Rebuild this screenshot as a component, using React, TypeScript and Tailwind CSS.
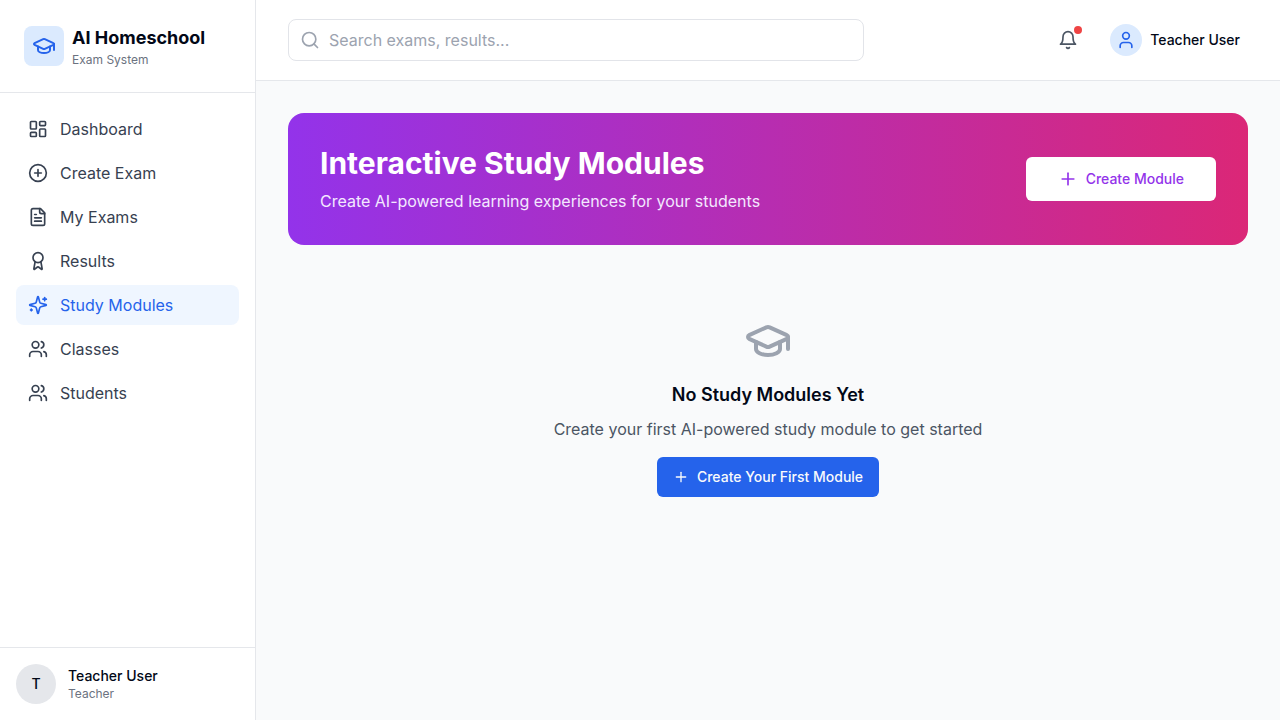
import React from "react";
import {
  Award,
  CirclePlus,
  GraduationCap,
  LayoutDashboard,
  Plus,
  Search,
  User,
  Users,
} from "lucide-react";

type IconProps = { className?: string };

type NavItem = {
  label: string;
  icon: React.ComponentType<IconProps>;
  active?: boolean;
};

function StrokeIcon({ className, children }: IconProps & { children: React.ReactNode }) {
  return (
    <svg
      viewBox="0 0 24 24"
      fill="none"
      stroke="currentColor"
      strokeWidth="2"
      strokeLinecap="round"
      strokeLinejoin="round"
      aria-hidden="true"
      className={className}
    >
      {children}
    </svg>
  );
}

function Sparkles({ className }: IconProps) {
  return (
    <StrokeIcon className={className}>
      <path d="M9.937 15.5A2 2 0 0 0 8.5 14.063l-6.135-1.582a.5.5 0 0 1 0-.962L8.5 9.936A2 2 0 0 0 9.937 8.5l1.582-6.135a.5.5 0 0 1 .963 0L14.063 8.5A2 2 0 0 0 15.5 9.937l6.135 1.581a.5.5 0 0 1 0 .964L15.5 14.063a2 2 0 0 0-1.437 1.437l-1.582 6.135a.5.5 0 0 1-.963 0z" />
      <path d="M20 3v4" />
      <path d="M22 5h-4" />
      <path d="M4 17v2" />
      <path d="M5 18H3" />
    </StrokeIcon>
  );
}

function Bell({ className }: IconProps) {
  return (
    <StrokeIcon className={className}>
      <path d="M6 8a6 6 0 0 1 12 0c0 7 3 9 3 9H3s3-2 3-9" />
      <path d="M10.3 21a1.94 1.94 0 0 0 3.4 0" />
    </StrokeIcon>
  );
}

function FileText({ className }: IconProps) {
  return (
    <StrokeIcon className={className}>
      <path d="M15 2H6a2 2 0 0 0-2 2v16a2 2 0 0 0 2 2h12a2 2 0 0 0 2-2V7Z" />
      <path d="M14 2v4a2 2 0 0 0 2 2h4" />
      <path d="M10 9H8" />
      <path d="M16 13H8" />
      <path d="M16 17H8" />
    </StrokeIcon>
  );
}

const navItems: NavItem[] = [
  { label: "Dashboard", icon: LayoutDashboard },
  { label: "Create Exam", icon: CirclePlus },
  { label: "My Exams", icon: FileText },
  { label: "Results", icon: Award },
  { label: "Study Modules", icon: Sparkles, active: true },
  { label: "Classes", icon: Users },
  { label: "Students", icon: Users },
];

function Sidebar() {
  return (
    <aside className="flex w-64 shrink-0 flex-col border-r border-[#e5e7eb] bg-white">
      <div className="flex items-center gap-2 border-b border-[#e5e7eb] p-6">
        <div className="flex size-10 items-center justify-center rounded-lg bg-[#dbeafe]">
          <GraduationCap className="size-6 text-[#2563eb]" />
        </div>
        <div>
          <p className="text-lg font-bold">AI Homeschool</p>
          <p className="text-xs text-[#6b7280]">Exam System</p>
        </div>
      </div>
      <nav className="flex flex-1 flex-col gap-1 p-4">
        {navItems.map(({ label, icon: Icon, active }) => (
          <a
            key={label}
            href="#"
            aria-current={active ? "page" : undefined}
            className={
              active
                ? "flex items-center gap-3 rounded-lg bg-[#eff6ff] px-3 py-2 text-[#2563eb]"
                : "flex items-center gap-3 rounded-lg px-3 py-2 text-[#374151]"
            }
          >
            <Icon className="size-5" />
            <span>{label}</span>
          </a>
        ))}
      </nav>
      <div className="flex items-center gap-3 border-t border-[#e5e7eb] p-4">
        <div className="flex size-10 items-center justify-center rounded-full bg-[#e5e7eb] text-sm font-medium">
          T
        </div>
        <div>
          <p className="text-sm font-medium">Teacher User</p>
          <p className="text-xs text-[#6b7280]">Teacher</p>
        </div>
      </div>
    </aside>
  );
}

function TopBar() {
  return (
    <header className="flex items-center justify-between border-b border-[#e5e7eb] bg-white px-8 py-4">
      <div className="relative w-full max-w-xl">
        <Search className="absolute top-1/2 left-3 size-5 -translate-y-1/2 text-[#9ca3af]" />
        <input
          type="search"
          aria-label="Search"
          placeholder="Search exams, results..."
          className="w-full rounded-lg border border-[#e2e4e9] py-2 pr-4 pl-10 placeholder:text-[#9ca3af]"
        />
      </div>
      <div className="flex items-center gap-4">
        <button type="button" aria-label="Notifications" className="relative p-2">
          <Bell className="size-5 text-[#4b5563]" />
          <span className="absolute top-1 right-1 size-2 rounded-full bg-[#ef4444]" />
        </button>
        <button type="button" className="flex items-center gap-2 px-2 py-2 text-sm font-medium">
          <span className="flex size-8 items-center justify-center rounded-full bg-[#dbeafe]">
            <User className="size-5 text-[#2563eb]" />
          </span>
          Teacher User
        </button>
      </div>
    </header>
  );
}

function StudyModules() {
  return (
    <main className="flex-1 p-8">
      <section className="flex items-center justify-between rounded-2xl bg-linear-to-r/srgb from-[#9333ea] to-[#db2777] p-8 text-white">
        <div>
          <h1 className="mb-2 text-3xl font-bold">Interactive Study Modules</h1>
          <p className="text-[#f3e8ff]">Create AI-powered learning experiences for your students</p>
        </div>
        <button
          type="button"
          className="flex h-11 items-center gap-2 rounded-md bg-white px-8 text-sm font-medium text-[#9333ea]"
        >
          <Plus className="size-5" />
          Create Module
        </button>
      </section>
      <section className="flex flex-col items-center py-18 text-center">
        <GraduationCap className="mb-4 size-12 text-[#9ca3af]" />
        <h2 className="mb-2 text-lg font-semibold">No Study Modules Yet</h2>
        <p className="mb-4 text-[#4b5563]">Create your first AI-powered study module to get started</p>
        <button
          type="button"
          className="flex h-10 items-center gap-2 rounded-md bg-[#2563eb] px-4 text-sm font-medium text-[#f8fafc]"
        >
          <Plus className="size-4" />
          Create Your First Module
        </button>
      </section>
    </main>
  );
}

export default function App() {
  return (
    <div className="flex min-h-screen bg-[#f9fafb] font-['Inter',sans-serif] text-[#020817]">
      <Sidebar />
      <div className="flex min-w-0 flex-1 flex-col">
        <TopBar />
        <StudyModules />
      </div>
    </div>
  );
}
